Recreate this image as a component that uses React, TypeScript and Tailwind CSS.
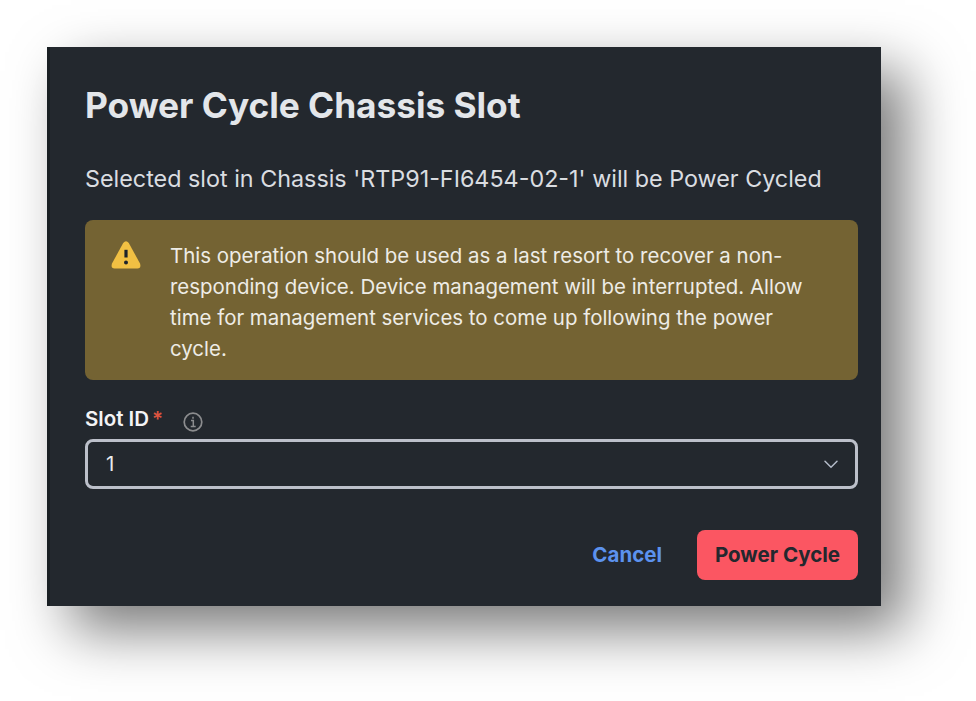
export default function App() {
  return (
    <div className="h-[701px] w-[976px] overflow-hidden bg-white pl-[47px] pt-[47px] font-['Inter',sans-serif]">
      <div className="h-[559px] w-[834px] border-l-[3px] border-[#191f23] bg-[#23282e] pl-[35px] pr-[23px] pt-[39px] shadow-[24px_24px_54px_0px_rgba(0,0,0,0.53)]">
        <h1 className="h-[40px] whitespace-nowrap text-[35.3px] font-bold leading-[40px] tracking-[-0.05px] text-[#e3e6ea]">
          Power Cycle Chassis Slot
        </h1>
        <p className="mt-[38px] h-[30px] whitespace-nowrap text-[23.33px] leading-[30px] text-[#dadde1]">
          Selected slot in Chassis 'RTP91-FI6454-02-1' will be Power Cycled
        </p>
        <div className="mt-[26px] flex h-[160px] rounded-[8px] bg-[#746333] pl-[26px] pt-[20px]">
          <svg className="mt-px h-[30px] w-[30px] shrink-0" viewBox="0 0 30 30">
            <path d="M12.200 2 Q15 -1.600 17.800 2 L29 22.500 Q30.500 27.300 26.500 27.500 H3.500 Q-.5 27.300 1 22.500Z" fill="#f1c043" />
            <path d="M15 8.800v7.700" stroke="#1c232b" strokeWidth="3.200" />
            <circle cx="15" cy="21.400" r="2" fill="#1c232b" />
          </svg>
          <div className="ml-[29px] mt-px whitespace-nowrap text-[20.46px] leading-[30.9px] text-[#eeece6]">
            <p>This operation should be used as a last resort to recover a non-</p>
            <p>responding device. Device management will be interrupted. Allow</p>
            <p>time for management services to come up following the power</p>
            <p>cycle.</p>
          </div>
        </div>
        <div className="mt-[26px] flex h-[26px] items-center text-[20.5px] font-semibold text-[#f3f4f6]">
          <span>Slot ID</span><span className="ml-[3px] text-[#dc5440]">*</span>
          <svg className="ml-[20px] mt-[5px] h-[20px] w-[20px]" viewBox="0 0 20 20" fill="none" stroke="#8b8c8e" strokeWidth="1.700">
            <circle cx="10" cy="10" r="8.800" /><path d="M8 8.500h2.300v5.700M7.700 14.500h5M10 4.800v2" strokeWidth="1.500" />
          </svg>
        </div>
        <div className="mt-[7px] flex h-[50px] items-center justify-between rounded-[8px] border-[3px] border-[#bcc0ca] pl-[18px] pr-[16px] text-[20.5px] text-[#e9ebed]">
          <span>1</span>
          <svg className="h-[14px] w-[16px]" viewBox="0 0 16 14" fill="none" stroke="#b5bdca" strokeWidth="1.500" strokeLinecap="round"><path d="m2 4.200 6 6 6-6" /></svg>
        </div>
        <div className="mt-[41px] flex items-center justify-end text-[20.5px] font-bold">
          <span className="mr-[35px] text-[#5c92ee]">Cancel</span>
          <button className="h-[50px] w-[161px] rounded-[8px] bg-[#fb5662] text-[#23282e]">Power Cycle</button>
        </div>
      </div>
    </div>
  );
}
